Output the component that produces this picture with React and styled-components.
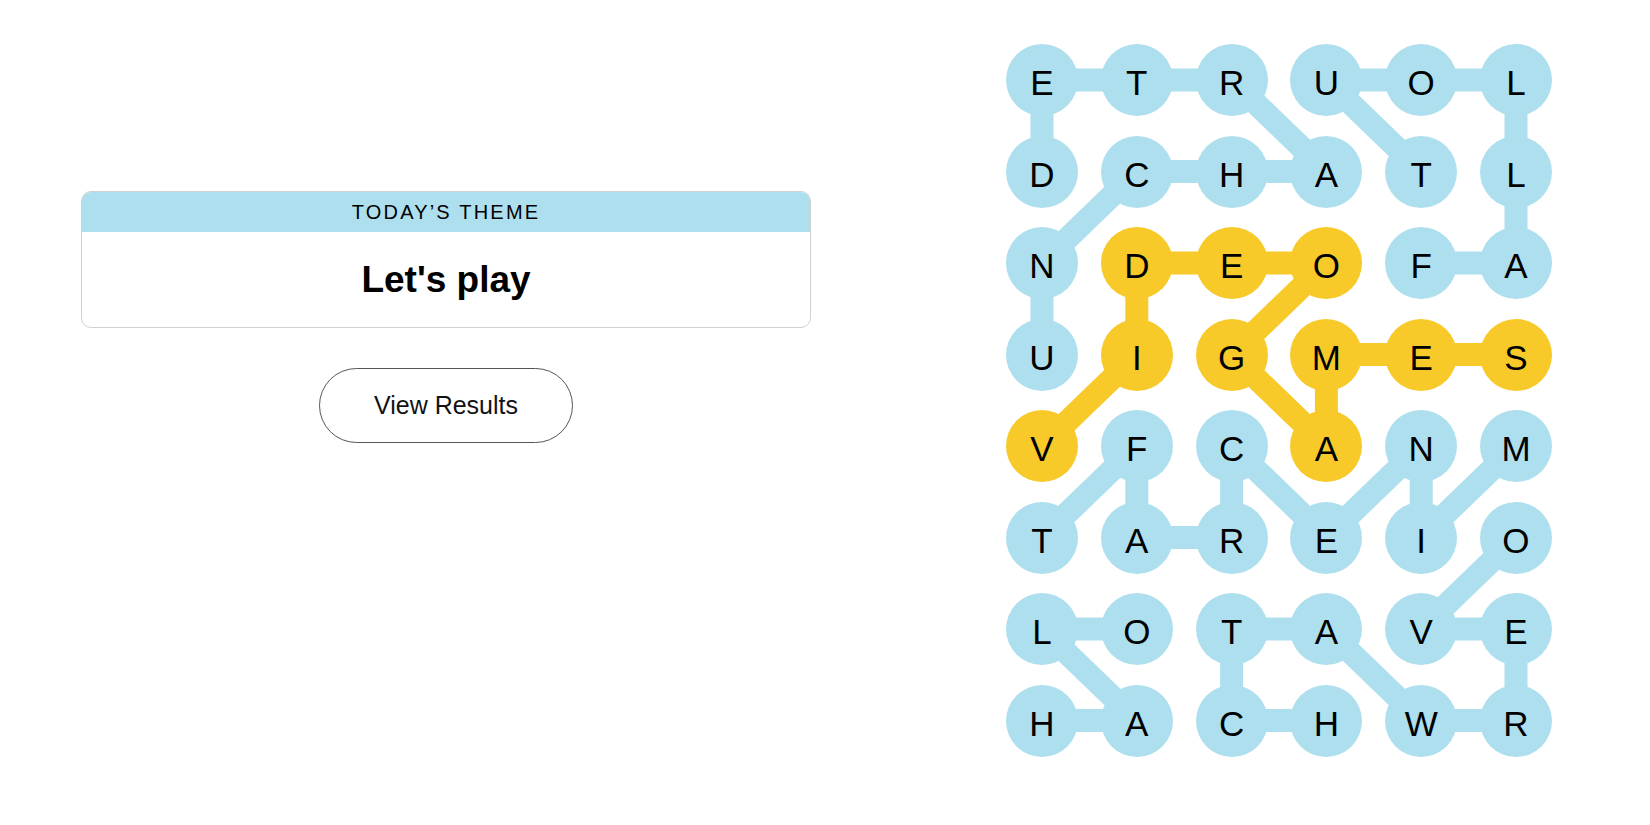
import styled, { createGlobalStyle } from "styled-components";

const GlobalStyle = createGlobalStyle`
    html, body {
        margin: 0;
        padding: 0;
        background: #ffffff;
        font-family: "Liberation Sans", Arial, sans-serif;
        color: #121212;
    }
`;

const BLUE = "#aedfee";
const YELLOW = "#f7ca2a";
const CELL = 72;
const PITCH_X = 94.8;
const PITCH_Y = 91.5;

const ROWS = [
    "ETRUOL",
    "DCHATL",
    "NDEOFA",
    "UIGMES",
    "VFCANM",
    "TAREIO",
    "LOTAVE",
    "HACHWR",
];

// words as paths of [row, col]
const WORDS = [
    { spangram: true, cells: [[4, 0], [3, 1], [2, 1], [2, 2], [2, 3], [3, 2], [4, 3], [3, 3], [3, 4], [3, 5]] },
    { cells: [[3, 0], [2, 0], [1, 1], [1, 2], [1, 3], [0, 2], [0, 1], [0, 0], [1, 0]] },
    { cells: [[2, 4], [2, 5], [1, 5], [0, 5], [0, 4], [0, 3], [1, 4]] },
    { cells: [[4, 5], [5, 4], [4, 4], [5, 3], [4, 2], [5, 2], [5, 1], [4, 1], [5, 0]] },
    { cells: [[5, 5], [6, 4], [6, 5], [7, 5], [7, 4], [6, 3], [6, 2], [7, 2], [7, 3]] },
    { cells: [[7, 0], [7, 1], [6, 0], [6, 1]] },
];

const spangramCells = new Set(
    WORDS.filter(w => w.spangram).flatMap(w => w.cells.map(([r, c]) => `${r}-${c}`))
);

const Page = styled.main`
    display: flex;
    align-items: flex-start;
    padding: 44px 0 0 81px;
    min-height: 825px;
    box-sizing: border-box;
`;

const LeftPanel = styled.section`
    width: 730px;
    margin-top: 147px;
    display: flex;
    flex-direction: column;
    align-items: center;
    gap: 40px;
`;

const ThemeCard = styled.div`
    width: 100%;
    box-sizing: border-box;
    border: 1px solid #d0d0d0;
    border-radius: 10px;
    overflow: hidden;
    text-align: center;
`;

const ThemeHeader = styled.h2`
    margin: 0;
    height: 40px;
    line-height: 40px;
    background: ${BLUE};
    font-size: 20px;
    font-weight: 400;
    letter-spacing: 2.2px;
    text-transform: uppercase;
    color: #000;
`;

const ThemeBody = styled.div`
    height: 95px;
    display: flex;
    align-items: center;
    justify-content: center;
`;

const ThemeTitle = styled.h1`
    margin: 0;
    font-size: 37px;
    font-weight: 700;
    color: #000;
`;

const ResultsButton = styled.button`
    width: 254px;
    height: 75px;
    border: 1px solid #555;
    border-radius: 38px;
    background: #fff;
    font-family: "Liberation Sans", Arial, sans-serif;
    font-size: 25px;
    color: #121212;
    cursor: pointer;
`;

const Board = styled.div`
    position: relative;
    margin-left: 195px;
    width: ${CELL * 6 + PITCH_X * 5 - CELL * 5}px;
    height: ${CELL * 8 + PITCH_Y * 7 - CELL * 7}px;
`;

const Connectors = styled.svg`
    position: absolute;
    inset: 0;
    width: 100%;
    height: 100%;
    overflow: visible;
`;

const LetterGrid = styled.div`
    position: relative;
    display: grid;
    grid-template-columns: repeat(6, ${CELL}px);
    grid-template-rows: repeat(8, ${CELL}px);
    column-gap: ${PITCH_X - CELL}px;
    row-gap: ${PITCH_Y - CELL}px;
`;

const Letter = styled.button`
    width: ${CELL}px;
    height: ${CELL}px;
    padding: 6px 0 0;
    box-sizing: border-box;
    border: none;
    border-radius: 50%;
    background: ${p => (p.$spangram ? YELLOW : BLUE)};
    font-family: "Liberation Sans", Arial, sans-serif;
    font-size: 35px;
    font-weight: 400;
    color: #000;
    display: flex;
    align-items: center;
    justify-content: center;
`;

const center = ([r, c]) => [CELL / 2 + c * PITCH_X, CELL / 2 + r * PITCH_Y];

export default function App() {
    return (
        <>
            <GlobalStyle />
            <Page>
                <LeftPanel>
                    <ThemeCard>
                        <ThemeHeader>Today’s Theme</ThemeHeader>
                        <ThemeBody>
                            <ThemeTitle>Let's play</ThemeTitle>
                        </ThemeBody>
                    </ThemeCard>
                    <ResultsButton>View Results</ResultsButton>
                </LeftPanel>

                <Board>
                    <Connectors>
                        {
                            WORDS.map((word, i) => (
                                <polyline
                                    key={ i }
                                    points={ word.cells.map(cell => center(cell).join(",")).join(" ") }
                                    fill="none"
                                    stroke={ word.spangram ? YELLOW : BLUE }
                                    strokeWidth="23"
                                    strokeLinejoin="round"
                                />
                            ))
                        }
                    </Connectors>
                    <LetterGrid>
                        {
                            ROWS.flatMap((row, r) =>
                                row.split("").map((ch, c) => (
                                    <Letter key={ `${r}-${c}` } $spangram={ spangramCells.has(`${r}-${c}`) }>
                                        { ch }
                                    </Letter>
                                ))
                            )
                        }
                    </LetterGrid>
                </Board>
            </Page>
        </>
    );
}
